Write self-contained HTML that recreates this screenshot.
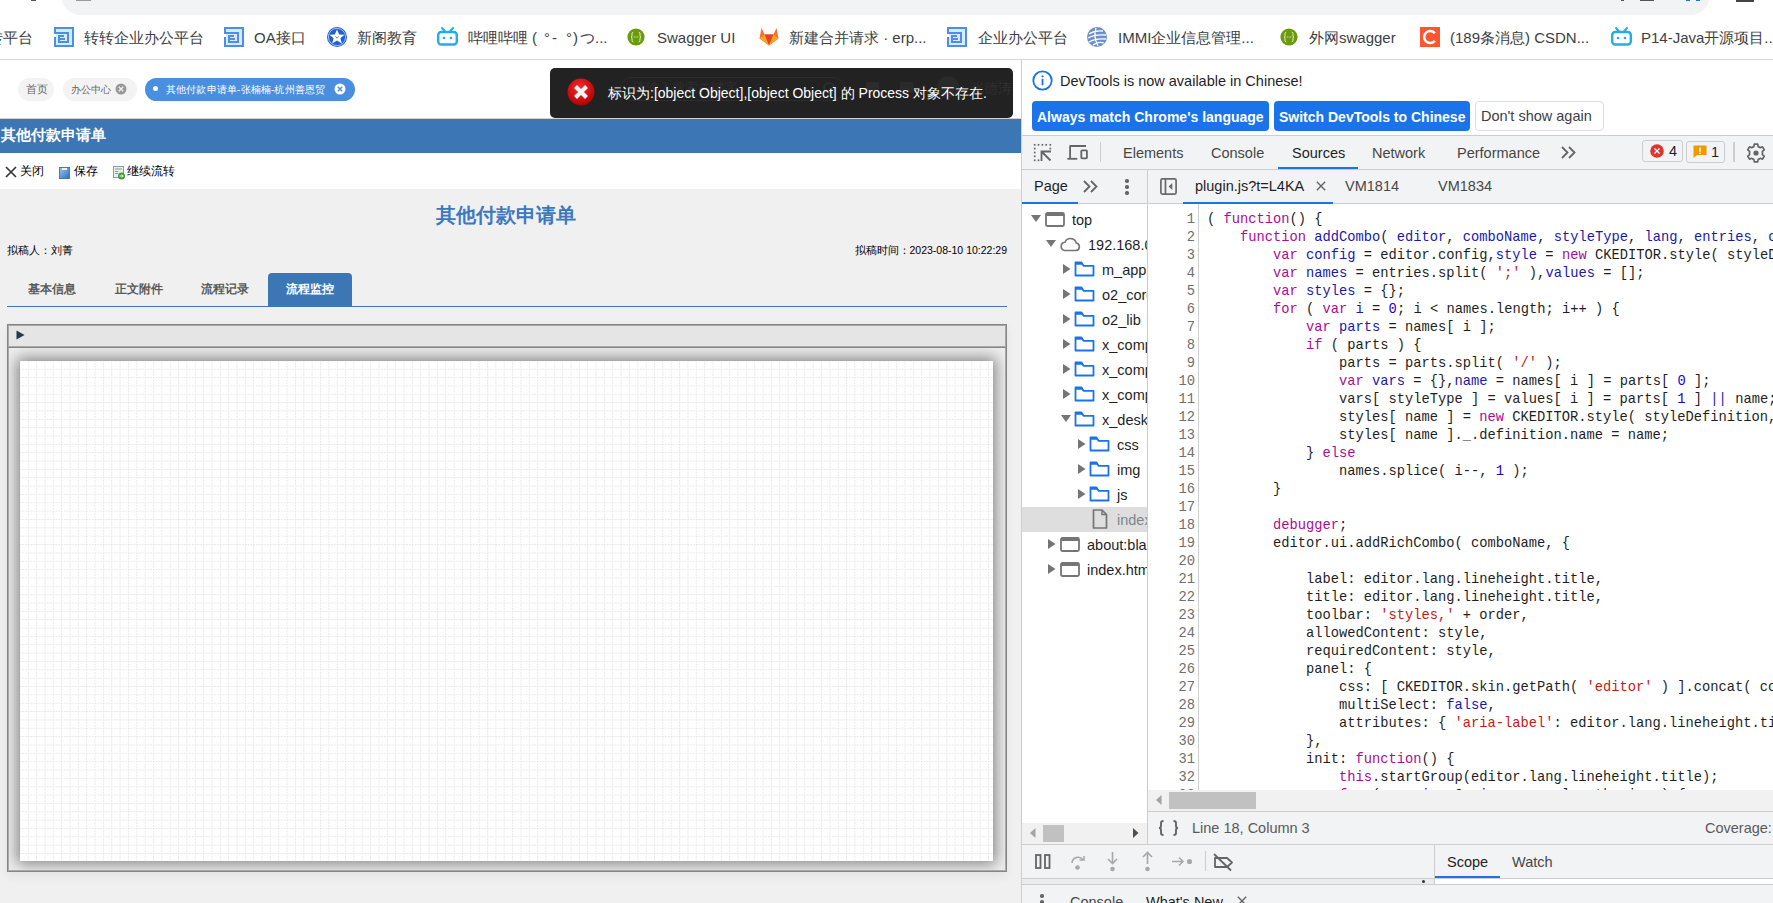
<!DOCTYPE html>
<html><head><meta charset="utf-8">
<style>
*{box-sizing:border-box;margin:0;padding:0}
html,body{width:1773px;height:903px;overflow:hidden;background:#fff;font-family:"Liberation Sans",sans-serif}
.a{position:absolute}
.t{position:absolute;white-space:nowrap}
svg{position:absolute;overflow:visible}
#addr{left:61px;top:-30px;width:1649px;height:45px;background:#f1f3f4;border-radius:0 0 20px 20px}
.bm{position:absolute;top:29px;height:18px;line-height:18px;font-size:15px;color:#3c4043;white-space:nowrap}
#bmline{left:0;top:59px;width:1773px;height:1px;background:#d5d6d8}
#page{left:0;top:60px;width:1021px;height:843px;background:#f0f0f0;overflow:hidden}
#dt{left:1021px;top:60px;width:752px;height:843px;background:#fff;overflow:hidden}
</style></head>
<body>
<div id="addr" class="a"></div>
<div class="a" style="left:31px;top:0;width:5px;height:1px;background:#555"></div>
<div class="a" style="left:76px;top:0;width:15px;height:1px;background:#999"></div>
<div class="a" style="left:1621px;top:0;width:3px;height:1px;background:#555"></div>
<div class="a" style="left:1640px;top:0;width:14px;height:1px;background:#555"></div>
<div class="a" style="left:1646px;top:0;width:2px;height:1px;background:#555"></div>
<div class="a" style="left:1686px;top:0;width:4px;height:1px;background:#1a73e8"></div>
<div class="a" style="left:1696px;top:0;width:4px;height:1px;background:#1a73e8"></div>
<div class="a" style="left:1709px;top:0;width:1px;height:1px;background:#fff"></div>
<div class="a" style="left:1736px;top:0;width:18px;height:2px;background:#444"></div>
<!-- bookmarks -->
<div class="bm" style="left:-12px">转平台</div>
<svg style="left:54px;top:27px" width="20" height="20" viewBox="0 0 20 20"><rect x="0" y="0" width="20" height="20" fill="#4a90e8"/><rect x="2" y="2" width="16" height="16" fill="#dce9fb"/><rect x="0" y="5" width="15" height="2" fill="#4a90e8"/><rect x="13" y="5" width="2" height="11" fill="#4a90e8"/><rect x="4" y="14" width="11" height="2" fill="#4a90e8"/><rect x="4" y="8" width="2" height="8" fill="#4a90e8"/><rect x="4" y="8" width="6" height="2" fill="#4a90e8"/><rect x="6" y="11" width="5" height="2" fill="#4a90e8"/><rect x="0" y="7" width="2" height="3" fill="#fff"/></svg>
<div class="bm" style="left:84px">转转企业办公平台</div>
<svg style="left:224px;top:27px" width="20" height="20" viewBox="0 0 20 20"><rect x="0" y="0" width="20" height="20" fill="#4a90e8"/><rect x="2" y="2" width="16" height="16" fill="#dce9fb"/><rect x="0" y="5" width="15" height="2" fill="#4a90e8"/><rect x="13" y="5" width="2" height="11" fill="#4a90e8"/><rect x="4" y="14" width="11" height="2" fill="#4a90e8"/><rect x="4" y="8" width="2" height="8" fill="#4a90e8"/><rect x="4" y="8" width="6" height="2" fill="#4a90e8"/><rect x="6" y="11" width="5" height="2" fill="#4a90e8"/><rect x="0" y="7" width="2" height="3" fill="#fff"/></svg>
<div class="bm" style="left:254px">OA接口</div>
<svg style="left:327px;top:27px" width="20" height="20" viewBox="0 0 20 20"><circle cx="10" cy="10" r="10" fill="#1f5fd6"/><circle cx="10" cy="10" r="8.6" fill="none" stroke="#fff" stroke-width="0.6"/><polygon points="10,2.5 12.2,7.6 17.5,7.8 13.4,11.2 14.8,16.5 10,13.6 5.2,16.5 6.6,11.2 2.5,7.8 7.8,7.6" fill="#fff"/><path d="M8.3 9.5 L10 11 L11.7 9.5" stroke="#3aa860" stroke-width="1" fill="none"/></svg>
<div class="bm" style="left:357px">新阁教育</div>
<svg style="left:437px;top:27px" width="21" height="19" viewBox="0 0 21 19"><path d="M5 1 L8 4.5 M16 1 L13 4.5" stroke="#23ade5" stroke-width="2" stroke-linecap="round"/><rect x="1.2" y="5" width="18.6" height="12.5" rx="3" fill="none" stroke="#23ade5" stroke-width="2.4"/><circle cx="7" cy="11" r="1.3" fill="#23ade5"/><circle cx="14" cy="11" r="1.3" fill="#23ade5"/></svg>
<div class="bm" style="left:468px">哔哩哔哩</div><div class="bm" style="left:532px">(</div><div class="bm" style="left:544px">°</div><div class="bm" style="left:552px">-</div><div class="bm" style="left:566px">°</div><div class="bm" style="left:573px">)</div><div class="bm" style="left:580px">つ...</div>
<svg style="left:627px;top:28px" width="18" height="18" viewBox="0 0 18 18"><circle cx="9" cy="9" r="8.6" fill="#6b9a0a"/><path d="M6.3 4.2 Q5 4.2 5 5.6 V7.8 Q5 9 4 9 Q5 9 5 10.2 V12.4 Q5 13.8 6.3 13.8 M11.7 4.2 Q13 4.2 13 5.6 V7.8 Q13 9 14 9 Q13 9 13 10.2 V12.4 Q13 13.8 11.7 13.8" fill="none" stroke="#e6f0d6" stroke-width="1"/><rect x="6.8" y="8.5" width="1" height="1" fill="#e6f0d6"/><rect x="8.5" y="8.5" width="1" height="1" fill="#c9dcb0"/><rect x="10.2" y="8.5" width="1" height="1" fill="#e6f0d6"/></svg>
<div class="bm" style="left:657px">Swagger UI</div>
<svg style="left:759px;top:27px" width="20" height="19" viewBox="0 0 20 19"><polygon points="10,18.5 0.5,11.5 2.5,1 5.5,7.5 14.5,7.5 17.5,1 19.5,11.5" fill="#fc6d26"/><polygon points="10,18.5 5.5,7.5 14.5,7.5" fill="#e24329"/><polygon points="0.5,11.5 5.5,7.5 10,18.5" fill="#fca326"/><polygon points="19.5,11.5 14.5,7.5 10,18.5" fill="#fca326"/></svg>
<div class="bm" style="left:789px">新建合并请求 · erp...</div>
<svg style="left:947px;top:27px" width="20" height="20" viewBox="0 0 20 20"><rect x="0" y="0" width="20" height="20" fill="#4a90e8"/><rect x="2" y="2" width="16" height="16" fill="#dce9fb"/><rect x="0" y="5" width="15" height="2" fill="#4a90e8"/><rect x="13" y="5" width="2" height="11" fill="#4a90e8"/><rect x="4" y="14" width="11" height="2" fill="#4a90e8"/><rect x="4" y="8" width="2" height="8" fill="#4a90e8"/><rect x="4" y="8" width="6" height="2" fill="#4a90e8"/><rect x="6" y="11" width="5" height="2" fill="#4a90e8"/><rect x="0" y="7" width="2" height="3" fill="#fff"/></svg>
<div class="bm" style="left:978px">企业办公平台</div>
<svg style="left:1087px;top:27px" width="20" height="20" viewBox="0 0 20 20"><circle cx="10" cy="10" r="10" fill="#6b8fc7"/><path d="M2 7 Q8 3 16 4 M1 11 Q8 7 19 8 M2 15 Q9 11 19 12 M6 18 Q11 14 17 16 M9 1 Q6 9 11 19" stroke="#fff" stroke-width="1.3" fill="none"/></svg>
<div class="bm" style="left:1118px">IMMI企业信息管理...</div>
<svg style="left:1280px;top:28px" width="18" height="18" viewBox="0 0 18 18"><circle cx="9" cy="9" r="8.6" fill="#6b9a0a"/><path d="M6.3 4.2 Q5 4.2 5 5.6 V7.8 Q5 9 4 9 Q5 9 5 10.2 V12.4 Q5 13.8 6.3 13.8 M11.7 4.2 Q13 4.2 13 5.6 V7.8 Q13 9 14 9 Q13 9 13 10.2 V12.4 Q13 13.8 11.7 13.8" fill="none" stroke="#e6f0d6" stroke-width="1"/><rect x="6.8" y="8.5" width="1" height="1" fill="#e6f0d6"/><rect x="8.5" y="8.5" width="1" height="1" fill="#c9dcb0"/><rect x="10.2" y="8.5" width="1" height="1" fill="#e6f0d6"/></svg>
<div class="bm" style="left:1309px">外网swagger</div>
<svg style="left:1420px;top:27px" width="20" height="20" viewBox="0 0 20 20"><rect width="20" height="20" fill="#fc5531"/><path d="M14.8 6.2 A6 6 0 1 0 14.8 13.8" stroke="#fff" stroke-width="2.6" fill="none"/></svg>
<div class="bm" style="left:1450px">(189条消息) CSDN...</div>
<svg style="left:1611px;top:27px" width="21" height="19" viewBox="0 0 21 19"><path d="M5 1 L8 4.5 M16 1 L13 4.5" stroke="#23ade5" stroke-width="2" stroke-linecap="round"/><rect x="1.2" y="5" width="18.6" height="12.5" rx="3" fill="none" stroke="#23ade5" stroke-width="2.4"/><circle cx="7" cy="11" r="1.3" fill="#23ade5"/><circle cx="14" cy="11" r="1.3" fill="#23ade5"/></svg>
<div class="bm" style="left:1641px">P14-Java开源项目...</div>
<div id="bmline" class="a"></div>
<!-- ============ PAGE ============ -->
<div class="a" style="left:0;top:60px;width:1021px;height:843px;background:#f0f0f0"></div>
<div class="a" style="left:0;top:60px;width:1021px;height:58px;background:#fff"></div>
<!-- pills -->
<div class="a" style="left:18px;top:78px;width:36px;height:23px;border-radius:12px;background:#f3f3f3"></div>
<div class="t" style="left:26px;top:82px;font-size:10.5px;line-height:15px;color:#666">首页</div>
<div class="a" style="left:63px;top:78px;width:74px;height:23px;border-radius:12px;background:#f3f3f3"></div>
<div class="t" style="left:71px;top:82px;font-size:10px;line-height:15px;color:#666">办公中心</div>
<svg style="left:115px;top:83px" width="12" height="12" viewBox="0 0 12 12"><circle cx="6" cy="6" r="5.5" fill="#999"/><path d="M3.8 3.8 L8.2 8.2 M8.2 3.8 L3.8 8.2" stroke="#f3f3f3" stroke-width="1.3"/></svg>
<div class="a" style="left:145px;top:78px;width:210px;height:23px;border-radius:12px;background:#4a8fdf"></div>
<div class="a" style="left:153px;top:86px;width:5px;height:5px;border-radius:50%;background:#fff"></div>
<div class="t" style="left:166px;top:82px;font-size:10px;line-height:15px;color:#fff;letter-spacing:0.15px">其他付款申请单-张楠楠-杭州善恩贸</div>
<svg style="left:334px;top:83px" width="12" height="12" viewBox="0 0 12 12"><circle cx="6" cy="6" r="5.5" fill="#fff"/><path d="M3.8 3.8 L8.2 8.2 M8.2 3.8 L3.8 8.2" stroke="#4a8fdf" stroke-width="1.4"/></svg>
<!-- header bar -->
<div class="a" style="left:0;top:118px;width:1021px;height:1px;background:#d8d0ca"></div>
<div class="a" style="left:0;top:119px;width:1021px;height:34px;background:#3c76b5"></div>
<div class="t" style="left:1px;top:126px;font-size:15px;line-height:18px;color:#fff;font-weight:bold">其他付款申请单</div>
<!-- toolbar -->
<div class="a" style="left:0;top:153px;width:1021px;height:36px;background:#fff"></div>
<svg style="left:5px;top:166px" width="12" height="12" viewBox="0 0 12 12"><path d="M1 1 L11 11 M11 1 L1 11" stroke="#333" stroke-width="1.6"/></svg>
<div class="t" style="left:20px;top:164px;font-size:12px;line-height:15px;color:#000">关闭</div>
<svg style="left:59px;top:167px" width="11" height="12" viewBox="0 0 11 12"><defs><linearGradient id="sg" x1="0" y1="0" x2="1" y2="1"><stop offset="0" stop-color="#9cc4ee"/><stop offset="1" stop-color="#2f6fb8"/></linearGradient></defs><rect x="0.5" y="0.5" width="10" height="11" fill="url(#sg)" stroke="#4a79b0" stroke-width="1"/><rect x="3" y="1" width="5" height="2" fill="#e8f0fa"/></svg>
<div class="t" style="left:74px;top:164px;font-size:12px;line-height:15px;color:#000">保存</div>
<svg style="left:113px;top:166px" width="13" height="14" viewBox="0 0 13 14"><rect x="0.5" y="0.5" width="10" height="11" fill="#e8eff6" stroke="#7c9cc0" stroke-width="1"/><rect x="2" y="2" width="7" height="2" fill="#b7d08f"/><rect x="2" y="5" width="3" height="1" fill="#7c9cc0"/><rect x="2" y="7" width="3" height="1" fill="#7c9cc0"/><circle cx="8.5" cy="10" r="3.5" fill="#3f9a3a"/><path d="M6.5 10 H10 M8.8 8.5 L10.3 10 L8.8 11.5" stroke="#fff" stroke-width="1"  fill="none"/></svg>
<div class="t" style="left:127px;top:164px;font-size:12px;line-height:15px;color:#000">继续流转</div>
<!-- form head -->
<div class="t" style="left:436px;top:204px;font-size:20px;line-height:22px;color:#3d78bf;font-weight:bold">其他付款申请单</div>
<div class="t" style="left:7px;top:243px;font-size:10.5px;line-height:14px;color:#000">拟稿人：刘菁</div>
<div class="t" style="right:766px;top:243px;font-size:10.5px;line-height:14px;color:#000">拟稿时间：2023-08-10 10:22:29</div>
<!-- tabs -->
<div class="t" style="left:28px;top:282px;font-size:12px;line-height:15px;color:#5a5a5a;font-weight:bold">基本信息</div>
<div class="t" style="left:115px;top:282px;font-size:12px;line-height:15px;color:#5a5a5a;font-weight:bold">正文附件</div>
<div class="t" style="left:201px;top:282px;font-size:12px;line-height:15px;color:#5a5a5a;font-weight:bold">流程记录</div>
<div class="a" style="left:268px;top:273px;width:84px;height:33px;background:#3c76b5;border-radius:4px 4px 0 0"></div>
<div class="t" style="left:286px;top:282px;font-size:12px;line-height:15px;color:#fff;font-weight:bold">流程监控</div>
<div class="a" style="left:7px;top:305.5px;width:1000px;height:1.5px;background:#3f78ba"></div>
<!-- panel -->
<div class="a" style="left:7px;top:324px;width:1000px;height:548px;border:1px solid #858585;background:#f0f0f0;box-shadow:inset 0 0 0 1px #a9a9a9, 0 4px 10px rgba(0,0,0,0.06)"></div>
<div class="a" style="left:9px;top:326px;width:996px;height:21px;background:#e5e5e5"></div>
<div class="a" style="left:8px;top:346px;width:998px;height:1px;background:#a9a9a9"></div><div class="a" style="left:8px;top:347px;width:998px;height:1px;background:#858585"></div>
<svg style="left:16px;top:330px" width="9" height="10" viewBox="0 0 9 10"><polygon points="0.5,0.5 8.5,5 0.5,9.5" fill="#23374e"/></svg>
<div class="a" style="left:9px;top:348px;width:996px;height:522px;overflow:hidden;background:#efefef">
  <div class="a" style="left:11px;top:13px;width:973px;height:500px;background:#fff;box-shadow:0 0 14px 3px rgba(0,0,0,0.45)">
    <svg style="left:0;top:0" width="973" height="500"><defs>
      <pattern id="gp" width="8.35" height="8.35" patternUnits="userSpaceOnUse" x="7.75" y="7.7">
        <path d="M0.5 0.3 V8.35" stroke="#dcdcdc" stroke-width="1" stroke-dasharray="1.2 1.58"/>
        <path d="M0.3 0.5 H8.35" stroke="#dcdcdc" stroke-width="1" stroke-dasharray="1.2 1.58"/>
      </pattern></defs>
      <rect width="973" height="500" fill="url(#gp)"/></svg>
  </div>
</div>
<!-- toast -->
<div class="a" style="left:550px;top:68px;width:463px;height:50px;background:#222;border-radius:5px"></div>
<svg style="left:567px;top:78px" width="28" height="28" viewBox="0 0 28 28"><defs><radialGradient id="rg" cx="0.45" cy="0.35" r="0.7"><stop offset="0" stop-color="#ff2a2a"/><stop offset="1" stop-color="#a80000"/></radialGradient></defs><circle cx="14" cy="14" r="13.5" fill="url(#rg)"/><path d="M8.5 8.5 L19.5 19.5 M19.5 8.5 L8.5 19.5" stroke="#f4f4f4" stroke-width="4.2"/></svg>
<div class="a" style="left:620px;top:77px;width:225px;height:24px;border-radius:12px;border:1px solid #2c2c2c"></div>
<div class="t" style="left:633px;top:80px;font-size:13px;line-height:16px;color:#2e2e2e">请输入搜索关键字</div>
<div class="a" style="left:823px;top:82px;width:12px;height:12px;border-radius:50%;border:2px solid #2e2e2e"></div>
<div class="a" style="left:866px;top:82px;width:13px;height:11px;background:#2c2c2c"></div>
<div class="a" style="left:900px;top:82px;width:13px;height:11px;background:#2a2a2a"></div>
<div class="a" style="left:937px;top:76px;width:22px;height:22px;border-radius:50%;background:#2a2a2a"></div>
<div class="t" style="left:970px;top:80px;font-size:14px;line-height:16px;color:#303030">张德涛</div>
<div class="t" style="left:608px;top:85px;font-size:14px;line-height:17px;color:#fff">标识为:[object Object],[object Object] 的 Process 对象不存在.</div>

<!-- ============ DEVTOOLS ============ -->
<style>
.dtx{position:absolute;white-space:nowrap;font-size:14.5px;line-height:18px;color:#1f1f1f}
.tt{position:absolute;white-space:nowrap;font-size:14.5px;line-height:18px}
.cl{position:absolute;left:0;height:18px;width:700px;white-space:pre;font-family:"Liberation Mono",monospace;font-size:13.75px;line-height:18px;color:#1f1f1f}
.ln{position:absolute;left:0;width:47px;text-align:right;color:#6f6f6f}
.cx{position:absolute;left:59px}
.k{color:#aa0d91} .d{color:#1a1aa6} .n{color:#1c00cf} .s{color:#c41a16}
.btn{position:absolute;top:101px;height:30px;border-radius:4px;background:#1a73e8;color:#fff;font-weight:bold;font-size:14px;line-height:32px;padding:0 0 0 5px;white-space:nowrap}
</style>
<div class="a" style="left:1021px;top:60px;width:1px;height:843px;background:#cbcdd1"></div>
<div class="a" style="left:1022px;top:60px;width:751px;height:843px;background:#fff"></div>
<!-- infobar -->
<svg style="left:1032px;top:70px" width="21" height="21" viewBox="0 0 21 21"><circle cx="10.5" cy="10.5" r="9.2" fill="none" stroke="#1a73e8" stroke-width="1.8"/><rect x="9.6" y="8.8" width="1.8" height="6.5" fill="#1a73e8"/><circle cx="10.5" cy="6.3" r="1.1" fill="#1a73e8"/></svg>
<div class="dtx" style="left:1060px;top:72px">DevTools is now available in Chinese!</div>
<div class="btn" style="left:1032px;width:237px">Always match Chrome's language</div>
<div class="btn" style="left:1274px;width:196px">Switch DevTools to Chinese</div>
<div class="a" style="left:1475px;top:101px;width:129px;height:30px;border:1px solid #dadce0;border-radius:4px;background:#fff"></div>
<div class="dtx" style="left:1481px;top:107px;color:#3c4043">Don't show again</div>
<!-- main toolbar -->
<div class="a" style="left:1022px;top:135px;width:751px;height:1px;background:#cbcdd1"></div>
<div class="a" style="left:1022px;top:136px;width:751px;height:33px;background:#f1f3f4"></div>
<div class="a" style="left:1022px;top:169px;width:751px;height:1px;background:#cbcdd1"></div>
<svg style="left:1025px;top:138px" width="80" height="30" viewBox="0 0 80 30"><rect x="8.85" y="5.95" width="1.7" height="1.7" fill="#656565"/><rect x="12.65" y="5.95" width="1.7" height="1.7" fill="#656565"/><rect x="16.55" y="5.95" width="1.7" height="1.7" fill="#656565"/><rect x="20.35" y="5.95" width="1.7" height="1.7" fill="#656565"/><rect x="24.45" y="5.95" width="1.7" height="1.7" fill="#656565"/><rect x="8.85" y="9.75" width="1.7" height="1.7" fill="#656565"/><rect x="8.85" y="13.65" width="1.7" height="1.7" fill="#656565"/><rect x="8.85" y="17.45" width="1.7" height="1.7" fill="#656565"/><rect x="8.85" y="21.45" width="1.7" height="1.7" fill="#656565"/><rect x="24.45" y="9.75" width="1.7" height="1.7" fill="#656565"/><rect x="12.65" y="21.45" width="1.7" height="1.7" fill="#656565"/><path d="M16.5 23 V13.5 H26 M16.5 13.5 L25.5 22.5" fill="none" stroke="#656565" stroke-width="1.8"/><path d="M45.1 20.5 V8.3 Q45.1 8 45.5 8 H61" fill="none" stroke="#656565" stroke-width="1.8"/><path d="M42.4 20.8 H52.3" stroke="#656565" stroke-width="1.8"/><rect x="56.3" y="12.3" width="5.6" height="8.1" rx="0.8" fill="none" stroke="#656565" stroke-width="1.8"/></svg>
<div class="a" style="left:1100px;top:142px;width:1px;height:20px;background:#cbcdd1"></div>
<div class="dtx" style="left:1123px;top:144px;color:#474747">Elements</div>
<div class="dtx" style="left:1211px;top:144px;color:#474747">Console</div>
<div class="dtx" style="left:1292px;top:144px;color:#1f1f1f">Sources</div>
<div class="a" style="left:1278px;top:167px;width:80px;height:2px;background:#1a73e8"></div>
<div class="dtx" style="left:1372px;top:144px;color:#474747">Network</div>
<div class="dtx" style="left:1457px;top:144px;color:#474747">Performance</div>
<svg style="left:1561px;top:146px" width="15" height="13" viewBox="0 0 15 13"><path d="M1 1 L6.5 6.5 L1 12 M8 1 L13.5 6.5 L8 12" fill="none" stroke="#656565" stroke-width="1.8"/></svg>
<div class="a" style="left:1642px;top:140px;width:41px;height:22px;border:1px solid #cbcdd1;border-radius:3px"></div>
<svg style="left:1650px;top:144px" width="14" height="14" viewBox="0 0 14 14"><circle cx="7" cy="7" r="6.8" fill="#dc362e"/><path d="M4.5 4.5 L9.5 9.5 M9.5 4.5 L4.5 9.5" stroke="#fff" stroke-width="1.3"/></svg>
<div class="dtx" style="left:1669px;top:142px;color:#1f1f1f">4</div>
<div class="a" style="left:1686px;top:141px;width:39px;height:22px;border:1px solid #cbcdd1;border-radius:3px"></div>
<svg style="left:1693px;top:145px" width="14" height="14" viewBox="0 0 14 14"><path d="M0.5 0.5 H13.5 V10 H4 L0.5 13 Z" fill="#f29900"/><rect x="6.3" y="2.5" width="1.5" height="4.2" fill="#fff"/><rect x="6.3" y="7.6" width="1.5" height="1.4" fill="#fff"/></svg>
<div class="dtx" style="left:1711px;top:143px;color:#1f1f1f">1</div>
<div class="a" style="left:1733px;top:142px;width:1.5px;height:20px;background:#cbcdd1"></div>
<svg style="left:1746px;top:143px" width="20" height="20" viewBox="0 0 20 20"><path d="M8.3 1.2 H11.7 L12.2 3.6 Q13.3 4 14.2 4.7 L16.5 3.9 L18.2 6.8 L16.4 8.4 Q16.6 10 16.4 11.6 L18.2 13.2 L16.5 16.1 L14.2 15.3 Q13.3 16 12.2 16.4 L11.7 18.8 H8.3 L7.8 16.4 Q6.7 16 5.8 15.3 L3.5 16.1 L1.8 13.2 L3.6 11.6 Q3.4 10 3.6 8.4 L1.8 6.8 L3.5 3.9 L5.8 4.7 Q6.7 4 7.8 3.6 Z" fill="none" stroke="#656565" stroke-width="1.7" stroke-linejoin="round"/><circle cx="10" cy="10" r="2.6" fill="#656565"/></svg>
<!-- second row -->
<div class="a" style="left:1022px;top:170px;width:751px;height:33px;background:#f1f3f4"></div>
<div class="a" style="left:1022px;top:203px;width:751px;height:1px;background:#cbcdd1"></div>
<div class="dtx" style="left:1034px;top:177px;color:#1f1f1f">Page</div>
<div class="a" style="left:1022px;top:202px;width:56px;height:2px;background:#1a73e8"></div>
<svg style="left:1083px;top:180px" width="15" height="13" viewBox="0 0 15 13"><path d="M1 1 L6.5 6.5 L1 12 M8 1 L13.5 6.5 L8 12" fill="none" stroke="#656565" stroke-width="1.8"/></svg>
<div class="a" style="left:1125px;top:179px;width:3.5px;height:3.5px;border-radius:50%;background:#656565"></div>
<div class="a" style="left:1125px;top:185px;width:3.5px;height:3.5px;border-radius:50%;background:#656565"></div>
<div class="a" style="left:1125px;top:191px;width:3.5px;height:3.5px;border-radius:50%;background:#656565"></div>
<div class="a" style="left:1147px;top:170px;width:1px;height:674px;background:#cbcdd1"></div>
<svg style="left:1159px;top:177px" width="19" height="19" viewBox="0 0 19 19"><rect x="1.9" y="1.9" width="15.2" height="15.2" rx="1.5" fill="none" stroke="#6a6a6a" stroke-width="1.7"/><rect x="5.6" y="1.9" width="1.7" height="15.2" fill="#6a6a6a"/><polygon points="13.3,6 13.3,13 9.6,9.5" fill="#6a6a6a"/></svg>
<div class="dtx" style="left:1195px;top:177px;color:#1f1f1f">plugin.js?t=L4KA</div>
<svg style="left:1316px;top:181px" width="10" height="10" viewBox="0 0 10 10"><path d="M0.8 0.8 L9.2 9.2 M9.2 0.8 L0.8 9.2" stroke="#656565" stroke-width="1.4"/></svg>
<div class="a" style="left:1183px;top:202px;width:150px;height:2px;background:#1a73e8"></div>
<div class="dtx" style="left:1345px;top:177px;color:#474747">VM1814</div>
<div class="dtx" style="left:1438px;top:177px;color:#474747">VM1834</div>
<!-- tree -->
<div class="a" style="left:1022px;top:204px;width:125px;height:619px;overflow:hidden">
<div class="a" style="left:-1022px;top:-204px;width:1147px;height:823px">
<svg style="left:1031px;top:215px" width="10" height="8" viewBox="0 0 10 8"><polygon points="0,0 10,0 5,7" fill="#757575"/></svg>
<svg style="left:1045px;top:212px" width="20" height="15" viewBox="0 0 20 15"><rect x="1" y="1" width="18" height="13" rx="1.5" fill="none" stroke="#757575" stroke-width="1.8"/><rect x="1" y="1" width="18" height="3" fill="#757575"/></svg>
<div class="tt" style="left:1072px;top:211px;color:#1f1f1f">top</div>
<svg style="left:1046px;top:240px" width="10" height="8" viewBox="0 0 10 8"><polygon points="0,0 10,0 5,7" fill="#757575"/></svg>
<svg style="left:1059px;top:237px" width="22" height="15" viewBox="0 0 22 15"><path d="M5.5 13.5 H17 A3.8 3.8 0 0 0 17.3 6 A6 6 0 0 0 6 5.2 A4.2 4.2 0 0 0 5.5 13.5 Z" fill="none" stroke="#757575" stroke-width="1.6"/></svg>
<div class="tt" style="left:1088px;top:236px;color:#1f1f1f">192.168.0.119:20020</div>
<svg style="left:1063px;top:264px" width="8" height="10" viewBox="0 0 8 10"><polygon points="0,0 7.5,5 0,10" fill="#757575"/></svg>
<svg style="left:1074px;top:261px" width="21" height="16" viewBox="0 0 21 16"><path d="M1.5 2.5 V14.5 H19.5 V4.8 H9.5 L7.5 1.5 H1.5 Z" fill="none" stroke="#1a73e8" stroke-width="1.8" stroke-linejoin="round"/><path d="M1.5 1.5 H7.5 L9 3.8 H1.5 Z" fill="#1a73e8"/></svg>
<div class="tt" style="left:1102px;top:261px;color:#1f1f1f">m_app</div>
<svg style="left:1063px;top:289px" width="8" height="10" viewBox="0 0 8 10"><polygon points="0,0 7.5,5 0,10" fill="#757575"/></svg>
<svg style="left:1074px;top:286px" width="21" height="16" viewBox="0 0 21 16"><path d="M1.5 2.5 V14.5 H19.5 V4.8 H9.5 L7.5 1.5 H1.5 Z" fill="none" stroke="#1a73e8" stroke-width="1.8" stroke-linejoin="round"/><path d="M1.5 1.5 H7.5 L9 3.8 H1.5 Z" fill="#1a73e8"/></svg>
<div class="tt" style="left:1102px;top:286px;color:#1f1f1f">o2_core</div>
<svg style="left:1063px;top:314px" width="8" height="10" viewBox="0 0 8 10"><polygon points="0,0 7.5,5 0,10" fill="#757575"/></svg>
<svg style="left:1074px;top:311px" width="21" height="16" viewBox="0 0 21 16"><path d="M1.5 2.5 V14.5 H19.5 V4.8 H9.5 L7.5 1.5 H1.5 Z" fill="none" stroke="#1a73e8" stroke-width="1.8" stroke-linejoin="round"/><path d="M1.5 1.5 H7.5 L9 3.8 H1.5 Z" fill="#1a73e8"/></svg>
<div class="tt" style="left:1102px;top:311px;color:#1f1f1f">o2_lib</div>
<svg style="left:1063px;top:339px" width="8" height="10" viewBox="0 0 8 10"><polygon points="0,0 7.5,5 0,10" fill="#757575"/></svg>
<svg style="left:1074px;top:336px" width="21" height="16" viewBox="0 0 21 16"><path d="M1.5 2.5 V14.5 H19.5 V4.8 H9.5 L7.5 1.5 H1.5 Z" fill="none" stroke="#1a73e8" stroke-width="1.8" stroke-linejoin="round"/><path d="M1.5 1.5 H7.5 L9 3.8 H1.5 Z" fill="#1a73e8"/></svg>
<div class="tt" style="left:1102px;top:336px;color:#1f1f1f">x_component_process</div>
<svg style="left:1063px;top:364px" width="8" height="10" viewBox="0 0 8 10"><polygon points="0,0 7.5,5 0,10" fill="#757575"/></svg>
<svg style="left:1074px;top:361px" width="21" height="16" viewBox="0 0 21 16"><path d="M1.5 2.5 V14.5 H19.5 V4.8 H9.5 L7.5 1.5 H1.5 Z" fill="none" stroke="#1a73e8" stroke-width="1.8" stroke-linejoin="round"/><path d="M1.5 1.5 H7.5 L9 3.8 H1.5 Z" fill="#1a73e8"/></svg>
<div class="tt" style="left:1102px;top:361px;color:#1f1f1f">x_component_Selector</div>
<svg style="left:1063px;top:389px" width="8" height="10" viewBox="0 0 8 10"><polygon points="0,0 7.5,5 0,10" fill="#757575"/></svg>
<svg style="left:1074px;top:386px" width="21" height="16" viewBox="0 0 21 16"><path d="M1.5 2.5 V14.5 H19.5 V4.8 H9.5 L7.5 1.5 H1.5 Z" fill="none" stroke="#1a73e8" stroke-width="1.8" stroke-linejoin="round"/><path d="M1.5 1.5 H7.5 L9 3.8 H1.5 Z" fill="#1a73e8"/></svg>
<div class="tt" style="left:1102px;top:386px;color:#1f1f1f">x_component_Template</div>
<svg style="left:1061px;top:415px" width="10" height="8" viewBox="0 0 10 8"><polygon points="0,0 10,0 5,7" fill="#757575"/></svg>
<svg style="left:1074px;top:411px" width="21" height="16" viewBox="0 0 21 16"><path d="M1.5 2.5 V14.5 H19.5 V4.8 H9.5 L7.5 1.5 H1.5 Z" fill="none" stroke="#1a73e8" stroke-width="1.8" stroke-linejoin="round"/><path d="M1.5 1.5 H7.5 L9 3.8 H1.5 Z" fill="#1a73e8"/></svg>
<div class="tt" style="left:1102px;top:411px;color:#1f1f1f">x_desktop</div>
<svg style="left:1078px;top:439px" width="8" height="10" viewBox="0 0 8 10"><polygon points="0,0 7.5,5 0,10" fill="#757575"/></svg>
<svg style="left:1089px;top:436px" width="21" height="16" viewBox="0 0 21 16"><path d="M1.5 2.5 V14.5 H19.5 V4.8 H9.5 L7.5 1.5 H1.5 Z" fill="none" stroke="#1a73e8" stroke-width="1.8" stroke-linejoin="round"/><path d="M1.5 1.5 H7.5 L9 3.8 H1.5 Z" fill="#1a73e8"/></svg>
<div class="tt" style="left:1117px;top:436px;color:#1f1f1f">css</div>
<svg style="left:1078px;top:464px" width="8" height="10" viewBox="0 0 8 10"><polygon points="0,0 7.5,5 0,10" fill="#757575"/></svg>
<svg style="left:1089px;top:461px" width="21" height="16" viewBox="0 0 21 16"><path d="M1.5 2.5 V14.5 H19.5 V4.8 H9.5 L7.5 1.5 H1.5 Z" fill="none" stroke="#1a73e8" stroke-width="1.8" stroke-linejoin="round"/><path d="M1.5 1.5 H7.5 L9 3.8 H1.5 Z" fill="#1a73e8"/></svg>
<div class="tt" style="left:1117px;top:461px;color:#1f1f1f">img</div>
<svg style="left:1078px;top:489px" width="8" height="10" viewBox="0 0 8 10"><polygon points="0,0 7.5,5 0,10" fill="#757575"/></svg>
<svg style="left:1089px;top:486px" width="21" height="16" viewBox="0 0 21 16"><path d="M1.5 2.5 V14.5 H19.5 V4.8 H9.5 L7.5 1.5 H1.5 Z" fill="none" stroke="#1a73e8" stroke-width="1.8" stroke-linejoin="round"/><path d="M1.5 1.5 H7.5 L9 3.8 H1.5 Z" fill="#1a73e8"/></svg>
<div class="tt" style="left:1117px;top:486px;color:#1f1f1f">js</div>
<div class="a" style="left:1022px;top:507px;width:125px;height:25px;background:#dedede"></div>
<svg style="left:1092px;top:509px" width="16" height="20" viewBox="0 0 16 20"><path d="M1.5 1 H10 L14.5 5.5 V19 H1.5 Z" fill="none" stroke="#757575" stroke-width="1.7" stroke-linejoin="round"/><path d="M10 1 V5.5 H14.5" fill="none" stroke="#757575" stroke-width="1.5"/></svg>
<div class="tt" style="left:1117px;top:511px;color:#80868b">index.html</div>
<svg style="left:1048px;top:539px" width="8" height="10" viewBox="0 0 8 10"><polygon points="0,0 7.5,5 0,10" fill="#757575"/></svg>
<svg style="left:1060px;top:537px" width="20" height="15" viewBox="0 0 20 15"><rect x="1" y="1" width="18" height="13" rx="1.5" fill="none" stroke="#757575" stroke-width="1.8"/><rect x="1" y="1" width="18" height="3" fill="#757575"/></svg>
<div class="tt" style="left:1087px;top:536px;color:#1f1f1f">about:blank</div>
<svg style="left:1048px;top:564px" width="8" height="10" viewBox="0 0 8 10"><polygon points="0,0 7.5,5 0,10" fill="#757575"/></svg>
<svg style="left:1060px;top:562px" width="20" height="15" viewBox="0 0 20 15"><rect x="1" y="1" width="18" height="13" rx="1.5" fill="none" stroke="#757575" stroke-width="1.8"/><rect x="1" y="1" width="18" height="3" fill="#757575"/></svg>
<div class="tt" style="left:1087px;top:561px;color:#1f1f1f">index.html</div>
</div></div>
<div class="a" style="left:1022px;top:823px;width:125px;height:21px;background:#f1f1f1"></div>
<svg style="left:1030px;top:828px" width="6" height="10" viewBox="0 0 6 10"><polygon points="5.5,0 5.5,10 0,5" fill="#a3a3a3"/></svg>
<div class="a" style="left:1043px;top:825px;width:21px;height:17px;background:#c1c1c1"></div>
<svg style="left:1133px;top:828px" width="6" height="10" viewBox="0 0 6 10"><polygon points="0,0 0,10 5.5,5" fill="#505050"/></svg>
<!-- editor -->
<div class="a" style="left:1148px;top:204px;width:625px;height:586px;background:#fff;overflow:hidden">
 <div class="a" style="left:50px;top:0;width:1px;height:586px;background:#d0d0d0"></div>
 <div class="a" style="left:0;top:7px;width:700px;height:600px">
<div class="cl" style="top:0px"><span class="ln">1</span><span class="cx">( <span class="k">function</span>() {</span></div>
<div class="cl" style="top:18px"><span class="ln">2</span><span class="cx">    <span class="k">function</span> <span class="d">addCombo</span>( <span class="d">editor</span>, <span class="d">comboName</span>, <span class="d">styleType</span>, <span class="d">lang</span>, <span class="d">entries</span>, <span class="d">order</span> ) {</span></div>
<div class="cl" style="top:36px"><span class="ln">3</span><span class="cx">        <span class="k">var</span> <span class="d">config</span> = editor.config,<span class="d">style</span> = <span class="k">new</span> CKEDITOR.style( styleDefinition, {} );</span></div>
<div class="cl" style="top:54px"><span class="ln">4</span><span class="cx">        <span class="k">var</span> <span class="d">names</span> = entries.split( <span class="s">';'</span> ),<span class="d">values</span> = [];</span></div>
<div class="cl" style="top:72px"><span class="ln">5</span><span class="cx">        <span class="k">var</span> <span class="d">styles</span> = {};</span></div>
<div class="cl" style="top:90px"><span class="ln">6</span><span class="cx">        <span class="k">for</span> ( <span class="k">var</span> <span class="d">i</span> = <span class="n">0</span>; i &lt; names.length; i++ ) {</span></div>
<div class="cl" style="top:108px"><span class="ln">7</span><span class="cx">            <span class="k">var</span> <span class="d">parts</span> = names[ i ];</span></div>
<div class="cl" style="top:126px"><span class="ln">8</span><span class="cx">            <span class="k">if</span> ( parts ) {</span></div>
<div class="cl" style="top:144px"><span class="ln">9</span><span class="cx">                parts = parts.split( <span class="s">'/'</span> );</span></div>
<div class="cl" style="top:162px"><span class="ln">10</span><span class="cx">                <span class="k">var</span> <span class="d">vars</span> = {},<span class="d">name</span> = names[ i ] = parts[ <span class="n">0</span> ];</span></div>
<div class="cl" style="top:180px"><span class="ln">11</span><span class="cx">                vars[ styleType ] = values[ i ] = parts[ <span class="n">1</span> ] <span class="d">||</span> name;</span></div>
<div class="cl" style="top:198px"><span class="ln">12</span><span class="cx">                styles[ name ] = <span class="k">new</span> CKEDITOR.style( styleDefinition, vars );</span></div>
<div class="cl" style="top:216px"><span class="ln">13</span><span class="cx">                styles[ name ]._.definition.name = name;</span></div>
<div class="cl" style="top:234px"><span class="ln">14</span><span class="cx">            } <span class="k">else</span></span></div>
<div class="cl" style="top:252px"><span class="ln">15</span><span class="cx">                names.splice( i--, <span class="n">1</span> );</span></div>
<div class="cl" style="top:270px"><span class="ln">16</span><span class="cx">        }</span></div>
<div class="cl" style="top:288px"><span class="ln">17</span><span class="cx"></span></div>
<div class="cl" style="top:306px"><span class="ln">18</span><span class="cx">        <span class="k">debugger</span>;</span></div>
<div class="cl" style="top:324px"><span class="ln">19</span><span class="cx">        editor.ui.addRichCombo( comboName, {</span></div>
<div class="cl" style="top:342px"><span class="ln">20</span><span class="cx"></span></div>
<div class="cl" style="top:360px"><span class="ln">21</span><span class="cx">            label: editor.lang.lineheight.title,</span></div>
<div class="cl" style="top:378px"><span class="ln">22</span><span class="cx">            title: editor.lang.lineheight.title,</span></div>
<div class="cl" style="top:396px"><span class="ln">23</span><span class="cx">            toolbar: <span class="s">'styles,'</span> + order,</span></div>
<div class="cl" style="top:414px"><span class="ln">24</span><span class="cx">            allowedContent: style,</span></div>
<div class="cl" style="top:432px"><span class="ln">25</span><span class="cx">            requiredContent: style,</span></div>
<div class="cl" style="top:450px"><span class="ln">26</span><span class="cx">            panel: {</span></div>
<div class="cl" style="top:468px"><span class="ln">27</span><span class="cx">                css: [ CKEDITOR.skin.getPath( <span class="s">'editor'</span> ) ].concat( config.contentsCss ),</span></div>
<div class="cl" style="top:486px"><span class="ln">28</span><span class="cx">                multiSelect: <span class="d">false</span>,</span></div>
<div class="cl" style="top:504px"><span class="ln">29</span><span class="cx">                attributes: { <span class="s">'aria-label'</span>: editor.lang.lineheight.title }</span></div>
<div class="cl" style="top:522px"><span class="ln">30</span><span class="cx">            },</span></div>
<div class="cl" style="top:540px"><span class="ln">31</span><span class="cx">            init: <span class="k">function</span>() {</span></div>
<div class="cl" style="top:558px"><span class="ln">32</span><span class="cx">                <span class="k">this</span>.startGroup(editor.lang.lineheight.title);</span></div>
<div class="cl" style="top:576px"><span class="ln">33</span><span class="cx">                <span class="k">for</span> ( <span class="k">var</span> <span class="d">i</span> = <span class="n">0</span>; i &lt; names.length; i++ ) {</span></div>
 </div>
</div>
<div class="a" style="left:1148px;top:790px;width:625px;height:21px;background:#f1f1f1"></div>
<svg style="left:1156px;top:795px" width="6" height="10" viewBox="0 0 6 10"><polygon points="5.5,0 5.5,10 0,5" fill="#a3a3a3"/></svg>
<div class="a" style="left:1169px;top:792px;width:87px;height:17px;background:#c1c1c1"></div>
<!-- status bar -->
<div class="a" style="left:1148px;top:811px;width:625px;height:1px;background:#cbcdd1"></div>
<div class="a" style="left:1148px;top:812px;width:625px;height:32px;background:#f1f3f4"></div>
<svg style="left:1158px;top:820px" width="21" height="16" viewBox="0 0 21 16"><path d="M5.5 1 Q3 1 3 3 V6 Q3 8 1 8 Q3 8 3 10 V13 Q3 15 5.5 15 M15.5 1 Q18 1 18 3 V6 Q18 8 20 8 Q18 8 18 10 V13 Q18 15 15.5 15" fill="none" stroke="#656565" stroke-width="1.9"/></svg>
<div class="dtx" style="left:1192px;top:819px;color:#5a5a5a">Line 18, Column 3</div>
<div class="dtx" style="left:1705px;top:819px;color:#5a5a5a">Coverage: n/a</div>
<!-- debugger toolbar -->
<div class="a" style="left:1022px;top:844px;width:751px;height:1px;background:#cbcdd1"></div>
<div class="a" style="left:1022px;top:845px;width:751px;height:33px;background:#f1f3f4"></div>
<div class="a" style="left:1022px;top:878px;width:751px;height:1px;background:#cbcdd1"></div>
<div class="a" style="left:1022px;top:879px;width:413px;height:5px;background:#ececec"></div><div class="a" style="left:1435px;top:879px;width:338px;height:5px;background:#fff"></div>
<div class="a" style="left:1022px;top:884px;width:751px;height:1px;background:#cbcdd1"></div>
<div class="a" style="left:1022px;top:885px;width:751px;height:18px;background:#f1f3f4"></div>
<div class="a" style="left:1434px;top:845px;width:1px;height:39px;background:#cbcdd1"></div>
<div class="a" style="left:1422px;top:880px;width:3px;height:3px;border-radius:50%;background:#333"></div>
<svg style="left:1035px;top:854px" width="16" height="15" viewBox="0 0 16 15"><rect x="1" y="1" width="4.5" height="13" fill="none" stroke="#656565" stroke-width="1.8"/><rect x="10" y="1" width="4.5" height="13" fill="none" stroke="#656565" stroke-width="1.8"/></svg>
<svg style="left:1070px;top:855px" width="16" height="16" viewBox="0 0 16 16"><path d="M2 8 A6 6 0 0 1 13 5" fill="none" stroke="#a8a8a8" stroke-width="1.6"/><path d="M9.5 5 H14 V1" fill="none" stroke="#a8a8a8" stroke-width="1.6"/><circle cx="7.5" cy="12.5" r="2.3" fill="#a8a8a8"/></svg>
<svg style="left:1107px;top:852px" width="11" height="20" viewBox="0 0 11 20"><path d="M5.5 0 V11 M1 7 L5.5 11.5 L10 7" fill="none" stroke="#a8a8a8" stroke-width="1.6"/><circle cx="5.5" cy="17" r="2.3" fill="#a8a8a8"/></svg>
<svg style="left:1142px;top:852px" width="11" height="20" viewBox="0 0 11 20"><path d="M5.5 12 V1 M1 5 L5.5 0.5 L10 5" fill="none" stroke="#a8a8a8" stroke-width="1.6"/><circle cx="5.5" cy="17" r="2.3" fill="#a8a8a8"/></svg>
<svg style="left:1172px;top:855px" width="22" height="13" viewBox="0 0 22 13"><path d="M0 6.5 H11 M7 2.5 L11 6.5 L7 10.5" fill="none" stroke="#a8a8a8" stroke-width="1.6"/><circle cx="17.5" cy="6.5" r="2.6" fill="#a8a8a8"/></svg>
<div class="a" style="left:1205px;top:851px;width:1px;height:20px;background:#cbcdd1"></div>
<svg style="left:1213px;top:853px" width="21" height="18" viewBox="0 0 21 18"><path d="M2 5 H14 L19 9.5 L14 14 H2 Z" fill="none" stroke="#656565" stroke-width="1.8" stroke-linejoin="round"/><path d="M1 1 L18 17.5" stroke="#656565" stroke-width="1.8"/></svg>
<div class="dtx" style="left:1447px;top:853px;color:#1f1f1f">Scope</div>
<div class="dtx" style="left:1512px;top:853px;color:#474747">Watch</div>
<div class="a" style="left:1435px;top:876px;width:65px;height:2px;background:#1a73e8"></div>
<!-- drawer -->
<div class="a" style="left:1040px;top:894px;width:3.5px;height:3.5px;border-radius:50%;background:#656565"></div>
<div class="a" style="left:1040px;top:900px;width:3.5px;height:3.5px;border-radius:50%;background:#656565"></div>
<div class="dtx" style="left:1070px;top:893px;color:#474747">Console</div>
<div class="dtx" style="left:1146px;top:893px;color:#1f1f1f">What's New</div>
<svg style="left:1237px;top:896px" width="10" height="10" viewBox="0 0 10 10"><path d="M0.8 0.8 L9.2 9.2 M9.2 0.8 L0.8 9.2" stroke="#656565" stroke-width="1.4"/></svg>
</body></html>
